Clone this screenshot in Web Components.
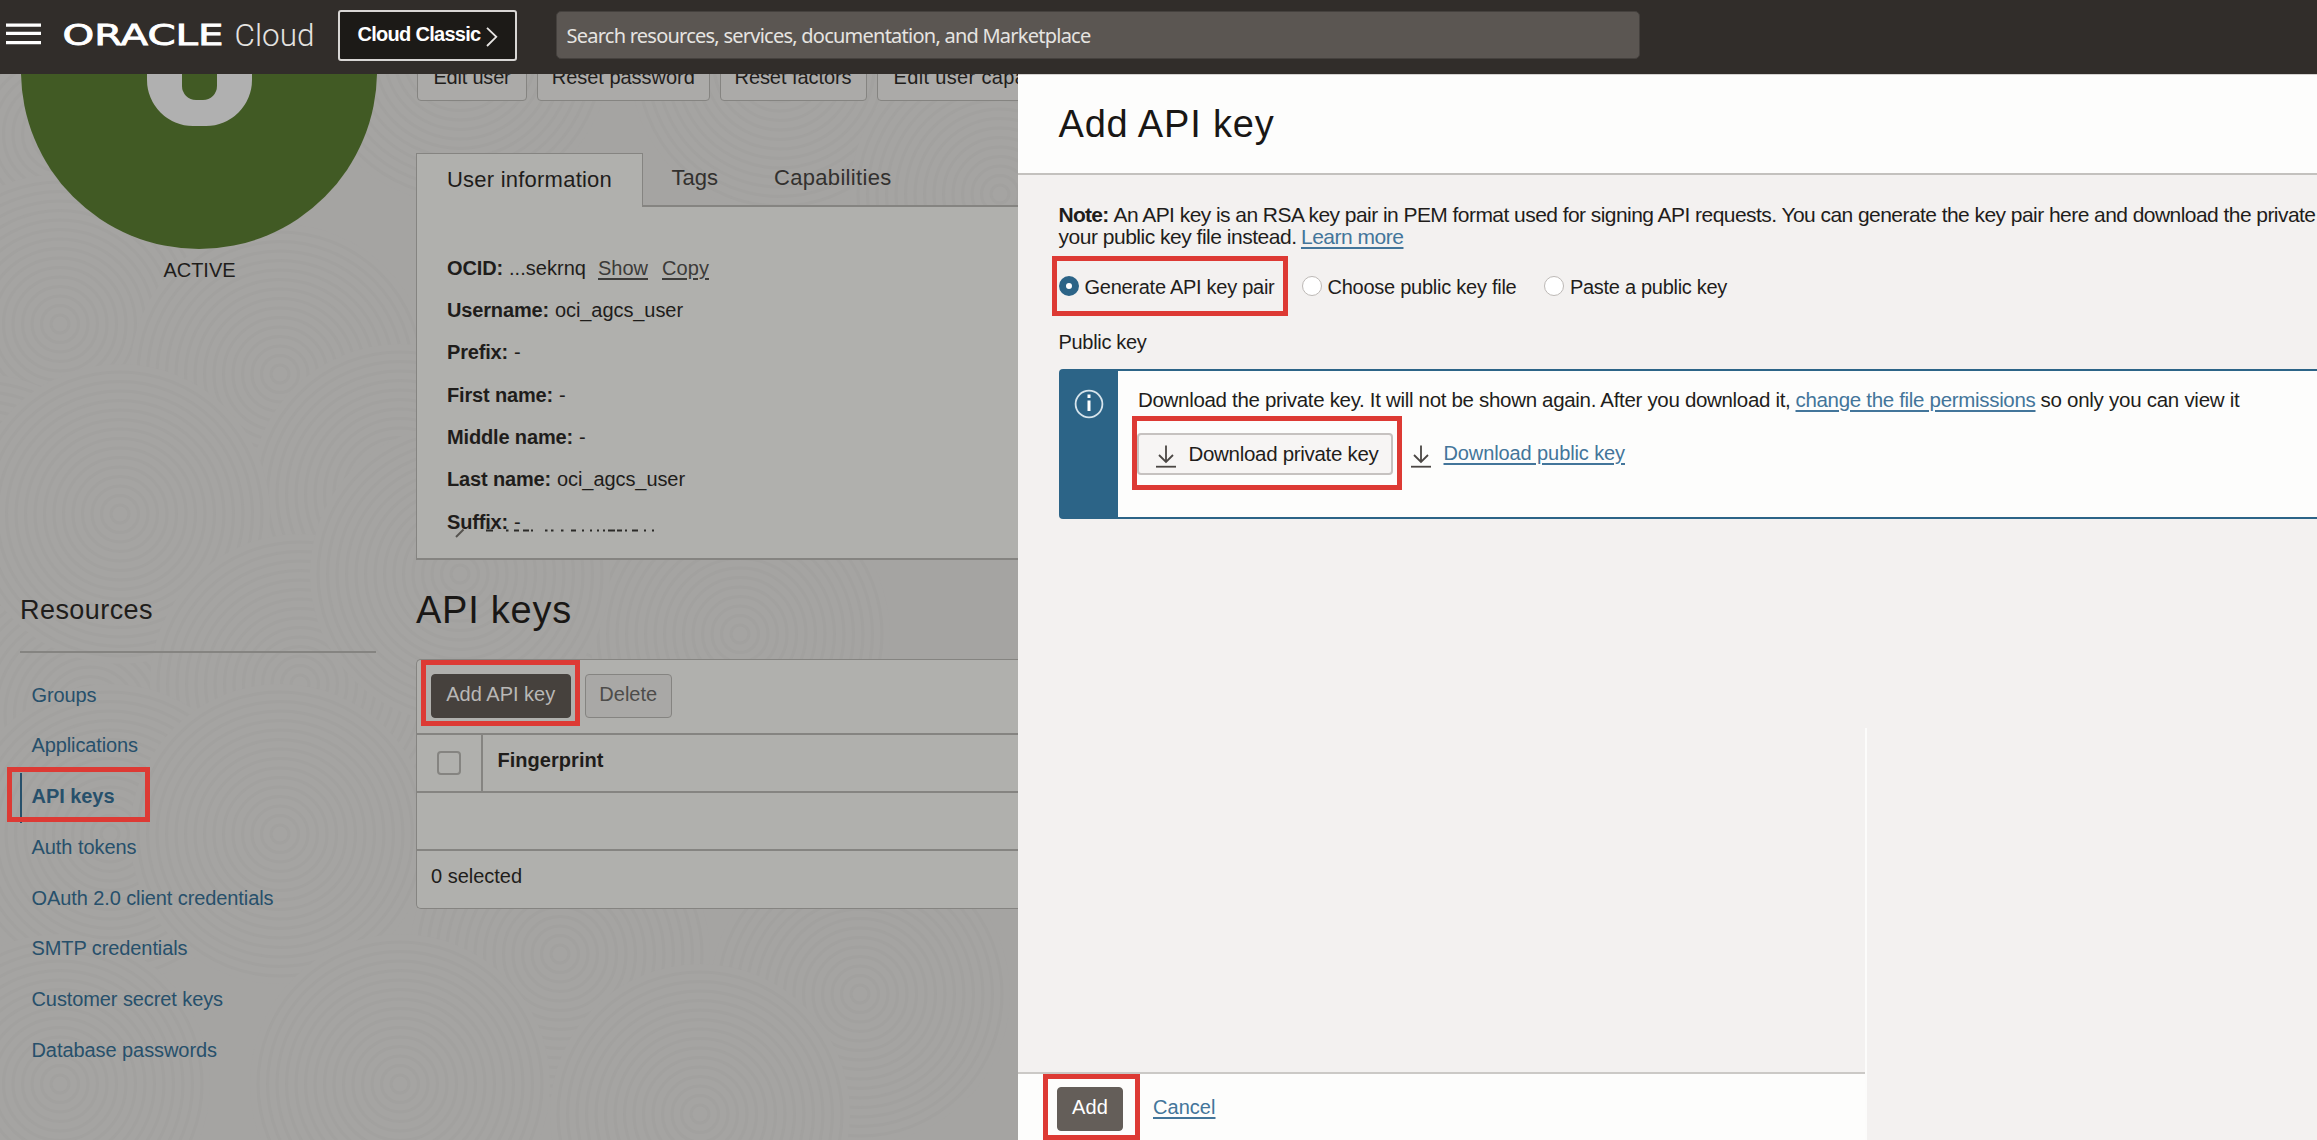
<!DOCTYPE html>
<html lang="en">
<head>
<meta charset="utf-8">
<title>Add API key</title>
<style>
html,body{margin:0;padding:0}
body{width:2317px;height:1140px;overflow:hidden;font-family:"Liberation Sans",Arial,sans-serif;font-size:20px;color:#1f1d1b;background:#f3f1f0}
</style>
</head>
<body>
<console-app></console-app>
<script>
const define = (name, html, setup) => {
  const tpl = document.createElement('template');
  tpl.innerHTML = html;
  customElements.define(name, class extends HTMLElement {
    constructor() {
      super();
      this.attachShadow({ mode: 'open' }).append(tpl.content.cloneNode(true));
    }
    connectedCallback() { if (setup) setup(this, this.shadowRoot); }
  });
};

/* One run of text, tracked so that it fills the width given in "fit". */
define('ui-text', `<style>
:host{display:inline-block;white-space:nowrap;flex:none}
:host([bold]){font-weight:700}
:host([link]){text-decoration:underline;text-decoration-thickness:2px;text-underline-offset:3px;text-decoration-skip-ink:auto;color:var(--link,#43759a)}
</style><slot></slot>`, el => {
  const want = parseFloat(el.getAttribute('fit'));
  if (!want) return;
  const natural = el.getBoundingClientRect().width;
  el.style.letterSpacing = ((want - natural) / el.textContent.length).toFixed(3) + 'px';
});

/* Red callout frame, laid over what it marks. */
define('call-out', `<style>:host{position:absolute;box-sizing:border-box;border:5px solid #dd3a34;z-index:5;pointer-events:none}</style>`);

define('ui-button', `<style>
:host{display:flex;box-sizing:border-box;flex:none;justify-content:center;align-items:flex-start;height:44px;border:1.5px solid #858481;border-radius:4px;background:#acaba9;line-height:38px}
:host([solid]){background:#46413d;border-color:#46413d;color:#b9b8b6}
:host([solid][bright]){background:#645e59;border-color:#645e59;color:#fff}
</style><slot></slot>`);

define('top-bar', `<style>
:host{display:flex;height:73.5px;background:#312d2a;align-items:flex-start;box-sizing:border-box;color:#fff;position:relative;z-index:6}
svg{display:block;flex:none}
.menu{margin:23px 0 0 6px}
.logo{margin:14px 0 0 21.5px}
.classic{display:flex;box-sizing:border-box;width:179px;height:51px;margin:9.5px 0 0 19.5px;border:2px solid #d8d6d4;border-radius:3px;background:#1c1a17;padding-left:17.5px;line-height:44px;font-weight:700}
.classic svg{margin:15px 0 0 5px}
.search{box-sizing:border-box;width:1084px;height:48px;margin:10.5px 0 0 38.5px;background:#5b5652;border:1px solid #45413e;border-radius:5px;padding-left:10px;font-family:"Noto Sans",sans-serif;line-height:47px;color:#e6e4e1}
</style>
<svg class="menu" width="35" height="23"><path d="M0 2.2h35M0 10.3h35M0 19.6h35" stroke="#fff" stroke-width="3.2"/></svg>
<svg class="logo" width="256" height="44" fill="#fff">
<text x="-.5" y="31.4" font-family="DejaVu Sans" font-size="27.5" textLength="161" lengthAdjust="spacingAndGlyphs" stroke="#fff" stroke-width=".8">ORACLE</text>
<text x="171.5" y="31.6" font-family="Roboto" font-weight="300" font-size="31" textLength="80" lengthAdjust="spacingAndGlyphs" fill="#e4e2e0">Cloud</text></svg>
<div class="classic"><ui-text fit="123">Cloud Classic</ui-text><svg width="12" height="20"><path d="M1 .8L10.3 9.8L1 19" fill="none" stroke="#e8e6e4" stroke-width="1.8"/></svg></div>
<div class="search"><ui-text fit="524">Search resources, services, documentation, and Marketplace</ui-text></div>`);

/* Faint overlapping ring texture behind the console page. */
define('ring-texture', `<style>:host{position:absolute;inset:0;z-index:-1}svg{display:block}</style>
<svg width="1018" height="1066"></svg>`, (el, root) => {
  const discs = [[60,60],[460,-20],[780,-10],[1000,120],[60,250],[280,300],[400,420],[-20,450],[90,640],[120,440],[300,610],[640,480],[740,560],[460,500],[110,760],[560,880],[860,920],[280,760],[60,1010],[400,1010],[700,1040]];
  let s = '';
  for (const [x, y] of discs) {
    s += `<circle cx="${x}" cy="${y}" r="150" fill="#a5a4a2"/>`;
    for (let r = 9; r < 150; r += 9.5) s += `<circle cx="${x}" cy="${y}" r="${r}" fill="none" stroke="#a2a19f" stroke-width="3"/>`;
  }
  root.querySelector('svg').innerHTML = s;
});

define('resource-link', `<style>
:host{display:block;position:relative;height:50.8px;line-height:50.8px;padding-left:11.5px;color:#27506b}
:host([current]){font-weight:700}
:host([current])::before{content:"";position:absolute;left:0;top:2px;width:2px;height:50px;background:#27506b}
</style><slot></slot>`);

define('side-nav', `<style>
:host{display:block;box-sizing:border-box;width:416px;padding-left:20px;flex:none}
.avatar{height:175.5px;width:358px;overflow:hidden;display:flex;justify-content:center;align-items:flex-start}
.disc{flex:none;width:356px;height:356px;border-radius:50%;margin-top:-180.5px;background:#415a24;display:flex;justify-content:center;align-items:flex-start}
.initial{box-sizing:border-box;width:105px;height:150px;margin-top:82.5px;border:solid #b0b0b0;border-width:26px 35px 26px 35px;border-radius:46px;background:#415a24;position:relative}
.initial::after{content:"";position:absolute;inset:0;border-radius:0 0 14px 14px;background:#415a24}
.initial::before{content:"";position:absolute;left:0;right:0;bottom:0;height:40px;background:#b0b0b0}
.state{height:40px;line-height:40px;text-align:center;width:359px;margin-top:1px}
h2{margin:300px 0 0;font:400 27px/40px "Liberation Sans";}
hr{margin:21px 0 17px;border:0;height:1.5px;width:356px;background:#858481}
</style>
<div class="avatar"><div class="disc"><div class="initial"></div></div></div>
<div class="state"><ui-text fit="72">ACTIVE</ui-text></div>
<h2><ui-text fit="133">Resources</ui-text></h2>
<hr>
<resource-link><ui-text fit="65">Groups</ui-text></resource-link>
<resource-link><ui-text fit="106.5">Applications</ui-text></resource-link>
<resource-link current><ui-text fit="83">API keys</ui-text></resource-link>
<resource-link><ui-text fit="105">Auth tokens</ui-text></resource-link>
<resource-link><ui-text fit="242">OAuth 2.0 client credentials</ui-text></resource-link>
<resource-link><ui-text fit="156">SMTP credentials</ui-text></resource-link>
<resource-link><ui-text fit="191.5">Customer secret keys</ui-text></resource-link>
<resource-link><ui-text fit="185.5">Database passwords</ui-text></resource-link>`);

define('user-detail', `<style>
:host{display:block;width:602px;flex:none}
.actions{display:flex;height:27px;align-items:flex-end;gap:10px}
.actions ui-button{line-height:38px;height:44px;background:#abaaa8}
.tabs{display:flex;height:54px;margin-top:52px;line-height:52px;font-size:22px;color:#33312f}
.tab{box-sizing:border-box}
.on{width:227px;border:1.5px solid #858481;border-bottom:0;background:#b0b0ad;padding-left:30px;line-height:51px;color:#1f1d1b}
.off{flex:1;border-bottom:2px solid #858481;display:flex;line-height:50px}
.card{box-sizing:border-box;height:353px;border:solid #858481;border-width:0 0 2px 1.5px;background:#b0b0ad;padding:40px 0 0 30px;--link:#3c3b39}
.row{height:42.35px;line-height:42.35px;display:flex}
.mark{display:block;margin:-15px 0 0 8px}
</style>
<div class="actions">
<ui-button style="width:110px;margin-left:1px"><ui-text fit="77">Edit user</ui-text></ui-button>
<ui-button style="width:172.5px"><ui-text fit="143">Reset password</ui-text></ui-button>
<ui-button style="width:147px"><ui-text fit="117">Reset factors</ui-text></ui-button>
<ui-button style="width:225px"><ui-text fit="191">Edit user capabilities</ui-text></ui-button>
</div>
<div class="tabs"><div class="tab on"><ui-text fit="165">User information</ui-text></div><div class="tab off">
<ui-text fit="46.5" style="margin-left:28.5px">Tags</ui-text><ui-text fit="117.5" style="margin-left:56px">Capabilities</ui-text></div></div>
<div class="card">
<div class="row"><ui-text bold fit="56">OCID:</ui-text><ui-text fit="77" style="margin-left:6px">...sekrnq</ui-text><ui-text link fit="50" style="margin-left:12px">Show</ui-text><ui-text link fit="47" style="margin-left:14px">Copy</ui-text></div>
<div class="row"><ui-text bold fit="102">Username:</ui-text><ui-text fit="128" style="margin-left:6px">oci_agcs_user</ui-text></div>
<div class="row"><ui-text bold fit="61">Prefix:</ui-text><ui-text style="margin-left:6px">-</ui-text></div>
<div class="row"><ui-text bold fit="106">First name:</ui-text><ui-text style="margin-left:6px">-</ui-text></div>
<div class="row"><ui-text bold fit="126">Middle name:</ui-text><ui-text style="margin-left:6px">-</ui-text></div>
<div class="row"><ui-text bold fit="104">Last name:</ui-text><ui-text fit="128" style="margin-left:6px">oci_agcs_user</ui-text></div>
<div class="row"><ui-text bold fit="61">Suffix:</ui-text><ui-text style="margin-left:6px">-</ui-text></div>
<svg class="mark" width="210" height="10" fill="none"><path d="M1 9L8.500 1.500" stroke="#55534f" stroke-width="2"/><path d="M31 2.500h7M51 2.500h2.500M59 2.500h5M68 2.500h6M76 2.500h2M90 2.500h2.500M96 2.500h2.500M106 2.500h2.500M116 2.500h5M127 2.500h2M135 2.500h2M142 2.500h2M148 2.500h2M153 2.500h7M162 2.500h5M170 2.500h2M177 2.500h6M189 2.500h2M197 2.500h2" stroke="#2b2a28" stroke-width="2"/></svg>
</div>`);

define('key-table', `<style>
:host{display:block;width:602px;flex:none}
h1{margin:20px 0 0;height:60px;font:400 38px/60px "Liberation Sans";color:#191715}
.table{box-sizing:border-box;margin-top:19px;height:250px;border:1.5px solid #858481;border-right:0;border-radius:5px 0 0 5px;background:#b0b0ad;display:flex;flex-direction:column}
.tools{display:flex;height:73px;padding:14.500px 0 0 14px;box-sizing:border-box;gap:14px}
.head,.blank,.foot{box-sizing:border-box;height:58px;border-top:2px solid #858481}
.head{display:flex}
.pick{box-sizing:border-box;width:65.5px;border-right:2px solid #858481;padding:16px 0 0 20px}
.pick i{display:block;box-sizing:border-box;width:24px;height:24px;border:2px solid #858481;border-radius:4px}
.head ui-text{margin-left:15px;line-height:51px}
.foot{padding-left:14px;line-height:51px}
</style>
<h1><ui-text fit="156">API keys</ui-text></h1>
<div class="table">
<div class="tools"><ui-button solid style="width:139.5px"><ui-text fit="109">Add API key</ui-text></ui-button><ui-button style="width:87.5px;color:#4d4c4a;background:#a9a8a6"><ui-text fit="58">Delete</ui-text></ui-button></div>
<div class="head"><div class="pick"><i></i></div><ui-text bold fit="106">Fingerprint</ui-text></div>
<div class="blank"></div>
<div class="foot"><ui-text fit="91">0 selected</ui-text></div>
</div>`);

define('radio-option', `<style>
:host{display:flex;flex:none;align-items:flex-start;line-height:40px}
i{box-sizing:border-box;flex:none;width:20px;height:20px;margin:8.5px 6px 0 0;border:1.5px solid #bdb9b6;border-radius:50%;background:#fff}
:host([checked]) i{border:7px solid #2c6487}
</style><i></i><slot></slot>`);

define('download-icon', `<style>:host{display:block;flex:none;width:20px;height:24px}svg{display:block}</style>
<svg width="20" height="24" fill="none" stroke="#4b4744" stroke-width="1.8"><path d="M10 .5V16.5M3 10L10 17L17 10"/><path d="M0 21.7H20"/></svg>`);

define('key-drawer', `<style>
:host{display:flex;flex-direction:column;flex:1;height:1066.5px;background:#f3f1f0;overflow:hidden}
header{box-sizing:border-box;height:101px;background:#fdfdfc;border-bottom:2px solid #c3c1be;border-top:1px solid #d4d2d0;padding-left:40.5px;font-size:38px;line-height:98px;color:#191715}
.body{display:block;padding-left:40.5px;height:897px;box-sizing:border-box;flex:none}
.note{padding-top:29px;font-size:21px}
.note div{height:22px;line-height:22px;display:flex}
.options{display:flex;margin-top:19.5px;height:40px}
.label{height:40px;line-height:40px;margin-top:14.5px}
.notice{box-sizing:border-box;display:flex;height:150.5px;margin-top:7px;border:2px solid #2c6487;border-right:0;border-radius:4px 0 0 4px;background:#fdfdfc}
.badge{width:57.5px;background:#2c6487;flex:none}
.badge svg{display:block;margin:18px 0 0 13px}
.copy{padding-left:20px}
.copy .text{display:flex;font-size:20.5px;height:40px;line-height:40px;margin-top:9px}
.buttons{display:flex;margin-top:13.5px}
.buttons ui-button{width:255.5px;height:42px;margin-left:-1px;border:2px solid #c6c2c0;background:#f7f5f4;justify-content:flex-start;padding-left:17px;font-size:20.5px}
.buttons download-icon{margin-top:10px}
.buttons .pub{margin:12px 13px 0 18px}
footer{box-sizing:border-box;display:flex;width:848px;height:69px;border-top:2px solid #cbc9c6;background:#fdfdfc;padding:13px 0 0 39px}
.seam{position:absolute;left:1865px;top:728px;width:2px;height:412px;background:#fcfcfb}
</style>
<header><ui-text fit="216">Add API key</ui-text></header>
<div class="body">
<div class="note"><div><ui-text bold fit="50">Note:</ui-text><ui-text fit="1202" style="margin-left:5px">An API key is an RSA key pair in PEM format used for signing API requests. You can generate the key pair here and download the private</ui-text></div>
<div><ui-text fit="238">your public key file instead.</ui-text><ui-text link fit="102.5" style="margin-left:4.500px">Learn more</ui-text></div></div>
<div class="options">
<radio-option checked><ui-text fit="190">Generate API key pair</ui-text></radio-option>
<radio-option style="margin-left:27px"><ui-text fit="189">Choose public key file</ui-text></radio-option>
<radio-option style="margin-left:27.500px"><ui-text fit="157">Paste a public key</ui-text></radio-option>
</div>
<div class="label"><ui-text fit="88">Public key</ui-text></div>
<div class="notice"><div class="badge"><svg width="30" height="30" fill="none" stroke="#d6e4ec"><circle cx="15" cy="15" r="13.4" stroke-width="1.8"/><path d="M15 11.5V22M15 5.5V9" stroke="#fff" stroke-width="3"/></svg></div>
<div class="copy"><div class="text"><ui-text fit="652.5">Download the private key. It will not be shown again. After you download it,</ui-text><ui-text link fit="240" style="margin-left:5px">change the file permissions</ui-text><ui-text fit="199" style="margin-left:5px">so only you can view it</ui-text></div>
<div class="buttons"><ui-button><download-icon></download-icon><ui-text fit="190" style="margin-left:12.500px">Download private key</ui-text></ui-button><download-icon class="pub"></download-icon><ui-text link fit="181.5" style="line-height:41px">Download public key</ui-text></div></div></div>
</div>
<footer><ui-button solid bright style="width:66px"><ui-text fit="36">Add</ui-text></ui-button><ui-text link fit="62.5" style="margin-left:30px;line-height:41px;height:40px">Cancel</ui-text></footer>
<div class="seam"></div>`);

define('console-app', `<style>
:host{display:block;position:relative;width:2317px;height:1140px;overflow:hidden}
.work{display:flex;height:1066.5px}
.page{display:flex;position:relative;width:1018px;height:1066.5px;flex:none;overflow:hidden;background:#a5a4a2;z-index:0}
</style>
<top-bar></top-bar>
<div class="work"><div class="page"><ring-texture></ring-texture><side-nav></side-nav><main><user-detail></user-detail><key-table></key-table></main></div><key-drawer></key-drawer></div>
<call-out style="left:7px;top:767px;width:143px;height:55px"></call-out>
<call-out style="left:421px;top:660px;width:159px;height:66px"></call-out>
<call-out style="left:1052px;top:256px;width:236px;height:60px"></call-out>
<call-out style="left:1132px;top:416px;width:270px;height:74px"></call-out>
<call-out style="left:1043px;top:1074px;width:97px;height:66px"></call-out>`);
</script>
</body>
</html>
